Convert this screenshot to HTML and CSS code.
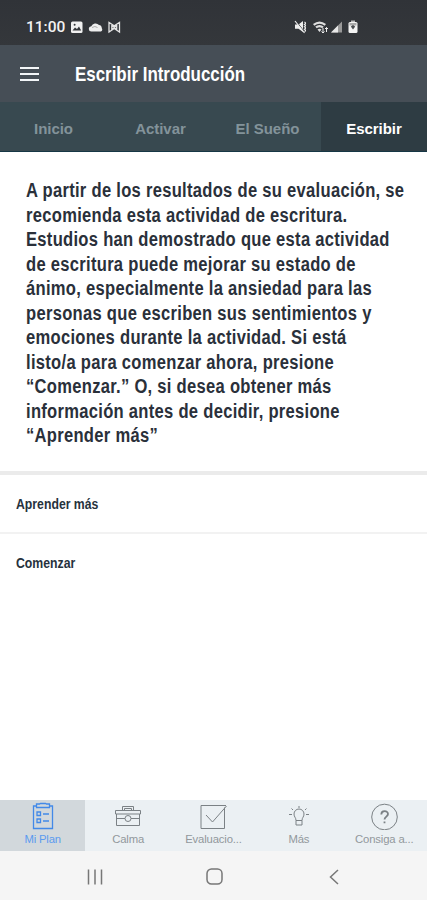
FILE: index.html
```html
<!DOCTYPE html>
<html lang="es">
<head>
<meta charset="utf-8">
<title>Escribir Introducción</title>
<link rel="stylesheet" href="styles.css">
</head>
<body>
<div class="screen">
  <div class="status">
    <span class="clock">11:00</span>
    <svg class="left-icons" width="54" height="14" viewBox="0 0 54 14">
      <rect x="1" y="1.5" width="11.5" height="11.5" rx="1.5" fill="#f1f1f1"/>
      <path d="M2.500 10.500 5 7.500l2 1.600 2-2.600 2.200 4z" fill="#34373b"/><circle cx="4.600" cy="4.700" r="1" fill="#34373b"/>
      <path d="M21.500 11.500a2.600 2.600 0 0 1-.2-5.200 4.600 4.600 0 0 1 7.700-1.300 3.300 3.300 0 0 1 2.800 3.200 2.400 2.400 0 0 1-.8 3.300z" fill="#eee"/><path d="M22 7.500q3-2 5.500 0" fill="none" stroke="#999" stroke-width=".8"/>
      <path d="M39 12V2.500l5.200 3.300 5.300-3.300V12l-5.300-3.500zM41.800 4v6.500M46.700 4v6.500M42 5.500l4.500 3.500M46.500 5.500 42 9" fill="none" stroke="#e4e4e4" stroke-width="1.300"/>
    </svg>
    <svg class="right-icons" width="68" height="16" viewBox="0 0 68 16">
      <path d="M2 5.500h3.500L10 2v11L5.500 9.700H2z" fill="#eee"/><path d="m3 2 9 11.500" stroke="#34373b" stroke-width="1"/><path d="m2 2 9.500 12M11.500 3q2 1.200 0 2.400 2 1.200 0 2.400 2 1.200 0 2.400 2 1.200 0 2.400" stroke="#eee" fill="none" stroke-width="1.200"/>
      <path d="M20 5q6.500-5 13 0l-1.300 1.700q-5.200-4-10.400 0zM22.300 7.500q4.200-3 8.400 0l-1.400 1.700q-2.800-2-5.600 0zM24.500 10.500q2-1.500 4 0l-2 2.500z" fill="#ddd"/><path d="M30 14V9m-1.500 3.500L30 14l1.500-1.500M33.500 8.500V13M32 10l1.500-1.500L35 10" stroke="#eee" fill="none"/>
      <path d="M38 13.500 49 2.500v11z" fill="#999"/><path d="m38 13.500 7-7v7z" fill="#e8e8e8"/>
      <rect x="55.500" y="3" width="9" height="11" rx="1.500" fill="#f4f4f4"/><path d="M58 3V1.500h4V3" fill="#bbb"/><path d="M56.500 4h7v2.500h-7z" fill="#aaa"/><path d="m57.800 7.500 2.200-1.500 2.200 1.500-2.200 3z" fill="#4a4d50"/>
    </svg>
  </div>
  <header class="appbar">
    <div class="menu"><i></i><i></i><i></i></div>
    <h1>Escribir Introducción</h1>
  </header>
  <nav class="tabs">
    <span>Inicio</span><span>Activar</span><span>El Sueño</span><span class="active">Escribir</span>
  </nav>
  <main>
    <div class="intro"><p>A partir de los resultados de su evaluación, se<br>recomienda esta actividad de escritura.<br>Estudios han demostrado que esta actividad<br>de escritura puede mejorar su estado de<br>ánimo, especialmente la ansiedad para las<br>personas que escriben sus sentimientos y<br>emociones durante la actividad. Si está<br>listo/a para comenzar ahora, presione<br>“Comenzar.” O, si desea obtener más<br>información antes de decidir, presione<br>“Aprender más”</p></div>
    <div class="row first"><span>Aprender más</span></div>
    <div class="row"><span>Comenzar</span></div>
  </main>
  <nav class="bottom">
    <div class="item on">
      <svg width="24" height="28" viewBox="0 0 24 28"><path d="M5.500 4h-3v22.500h19V4h-3M5.500 2h3l1-.5h5l1 .5h3v3.500h-13zM6 10h3.500v3.500H6zM6 17h3.500v3.500H6zM12 12h6M12 19h6"/></svg>
      <span>Mi Plan</span>
    </div>
    <div class="item">
      <svg width="28" height="28" viewBox="0 0 28 28"><path d="M1.500 8.500h25v3.500h-25zM2.500 12v11.500h23V12M8.500 8.500V4.500h11v4M10.500 8.500v-2h7v2M2.500 16.500H11M17 16.500h8.500"/><circle cx="14" cy="16.500" r="3"/></svg>
      <span>Calma</span>
    </div>
    <div class="item">
      <svg width="28" height="28" viewBox="0 0 28 28"><path d="M27 3.500H2v23h23.500V5.500M7 13l6.500 7L27.500 4"/></svg>
      <span>Evaluacio...</span>
    </div>
    <div class="item">
      <svg width="28" height="28" viewBox="0 0 28 28"><path d="M11 18.500c0-3-2-3.500-2-6.500a5 5 0 0 1 10 0c0 3-2 3.500-2 6.500zM11 18.500v4.500h6v-4.500M14 4v2M4 12.500h3M21 12.500h3M6.500 6.500l1.500 1.500M21.500 6.500L20 8"/></svg>
      <span>Más</span>
    </div>
    <div class="item">
      <svg width="28" height="28" viewBox="0 0 28 28"><circle cx="14.500" cy="15" r="12.800"/><path class="q" d="M11.300 12.500c0-4.500 6.700-4.300 6.700-.5 0 2.500-3.500 2.700-3.500 5.500M14.500 19.500v1.800"/></svg>
      <span>Consiga a...</span>
    </div>
  </nav>
  <div class="system">
    <svg width="16" height="16" viewBox="0 0 16 16"><path d="M1.500.5v15M8 .5v15M14.500.5v15"/></svg>
    <svg width="17" height="17" viewBox="0 0 17 17"><rect x="1" y="1" width="15" height="15" rx="4.500"/></svg>
    <svg width="10" height="16" viewBox="0 0 10 16"><path d="M9 1 1.500 8 9 15"/></svg>
  </div>
</div>
</body>
</html>
```
FILE: styles.css
```css
* { box-sizing: border-box; }
body { margin: 0; background: #fff; }
.screen { width: 427px; height: 900px; display: flex; flex-direction: column; overflow: hidden; font-family: "Liberation Sans", sans-serif; }
.status { height: 45px; background: linear-gradient(#303338, #34373b); display: flex; align-items: center; padding: 9px 66px 0 26px; color: #f2f2f2; }
.clock { font: 500 15.500px/20px Roboto, sans-serif; width: 44px; }
.right-icons { margin-left: auto; }
.appbar { height: 57px; background: #464e56; display: flex; align-items: center; padding: 1px 0 0 20px; }
.menu { width: 19px; display: grid; gap: 4px; }
.menu i { height: 2px; background: #f3f6f8; }
h1 { margin: 0 0 0 36px; color: #fff; font-size: 20.500px; line-height: 24px; font-weight: bold; white-space: nowrap; transform: scaleX(.825); transform-origin: left; }
.tabs { height: 50px; display: grid; grid-template-columns: 107px 107px 107px 106px; grid-template-rows: 49px; background: #384950; border-bottom: 1px solid #163745; color: #83939a; font-weight: bold; font-size: 15px; text-align: center; line-height: 53px; letter-spacing: -.05px; }
.tabs .active { background: #2e3c43; color: #fff; }
main { flex: 1; min-height: 0; }
.intro { height: 319px; padding: 26px 0 0 26px; }
.intro p { margin: 0; width: 470px; color: #2a303a; font-size: 20px; line-height: 24.500px; font-weight: bold; letter-spacing: .35px; white-space: nowrap; transform: scaleX(.828); transform-origin: left; }
.row { height: 60px; padding-left: 16px; border-top: 2px solid #f2f2f2; color: #26323d; font-size: 14px; line-height: 58px; font-weight: bold; }
.row span { display: inline-block; transform: scaleX(.875); transform-origin: left; }
.row.first { height: 61px; border-top: 4px solid #ebebeb; }
.bottom { height: 51px; display: grid; grid-template-columns: repeat(5, 1fr); background: #ebf0f3; color: #92989c; }
.item { display: flex; flex-direction: column; align-items: center; padding-top: 2px; font-size: 11.300px; line-height: 16px; letter-spacing: -.15px; }
.item svg { height: 28px; fill: none; stroke: #7b8185; stroke-width: 1; }
.item .q { stroke-width: 1.800; }
.item span { margin-top: 1px; }
.item.on { background: #d2d8dc; color: #5b9bef; }
.item.on svg { stroke: #4289e8; stroke-width: 1.300; }
.system { height: 49px; background: #f5f5f5; display: flex; justify-content: space-between; align-items: center; padding: 2px 88px 0 87px; }
.system svg { fill: none; stroke: #777; stroke-width: 1.500; }
.system svg:nth-child(2) { position: relative; left: -2px; }
```
